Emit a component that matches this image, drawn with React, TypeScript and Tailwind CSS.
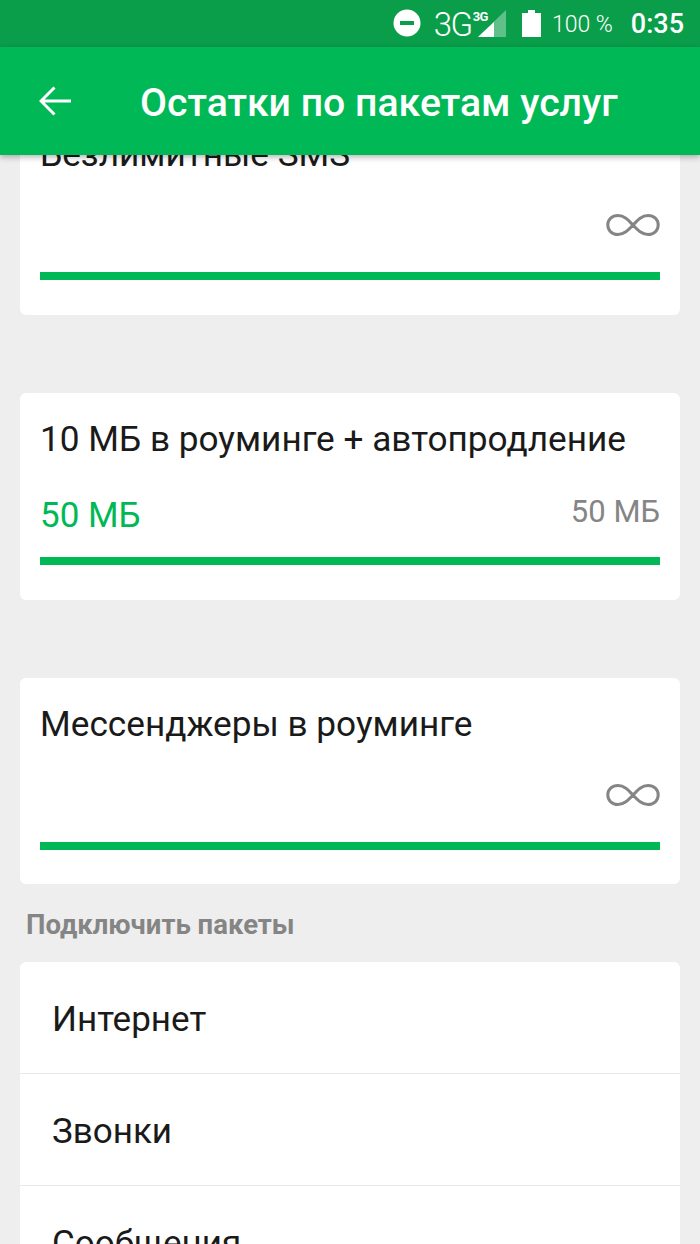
import React from 'react';

const Infinity8 = () => (
  <svg width="54" height="24" viewBox="0 0 54 24" fill="none">
    <path
      d="M27 12C22 6.500 18 2.500 12 2.500C6 2.500 1.800 6.500 1.800 12C1.800 17.500 6 21.500 12 21.500C18 21.500 22 17.500 27 12C32 6.500 36 2.500 42 2.500C48 2.500 52.200 6.500 52.200 12C52.200 17.500 48 21.500 42 21.500C36 21.500 32 17.500 27 12Z"
      stroke="#858585"
      strokeWidth="3"
    />
  </svg>
);

const StatusBar = () => (
  <div className="h-[47px] bg-[#0a9e4b] flex items-center justify-end pr-[16px] text-white font-['Roboto',sans-serif]">
    <svg width="28" height="28" viewBox="0 0 28 28" className="mr-[13px] -mt-[1px]">
      <circle cx="14" cy="14" r="13.500" fill="#fff" />
      <rect x="7" y="12" width="14" height="4" fill="#0a9e4b" />
    </svg>
    <span className="text-[33px] leading-none font-light tracking-[-1.500px] mt-[1px]">3G</span>
    <span className="text-[13px] font-bold leading-none self-start mt-[10px] ml-[1px] tracking-[-0.500px]">3G</span>
    <svg width="28" height="27" viewBox="0 0 28 27" className="-ml-[10px] mr-[16px]">
      <path d="M28 0V27H0Z" fill="#fff" fillOpacity="0.35" />
      <path d="M16 12V27H0Z" fill="#fff" />
    </svg>
    <svg width="19" height="27" viewBox="0 0 19 27" className="mr-[11px]">
      <path d="M6 0H13V3H19V27H0V3H6Z" fill="#fff" />
    </svg>
    <span className="text-[23px] leading-none font-light mr-[18px] mt-[2px]">100 %</span>
    <span className="text-[27px] leading-none font-medium mt-[2px]">0:35</span>
  </div>
);

const Header = () => (
  <div className="h-[108px] bg-[#00b956] flex items-center shadow-[0_2px_6px_rgba(0,0,0,0.3)]">
    <svg width="32" height="30" viewBox="0 0 32 30" fill="none" className="ml-[39px]">
      <path d="M32 15H2M15.500 1.500L2 15L15.500 28.500" stroke="#fff" strokeWidth="3" />
    </svg>
    <h1 className="ml-[69px] mt-[6px] text-[39.200px] leading-none font-medium text-white">Остатки по пакетам услуг</h1>
  </div>
);

const PackageCard = ({ title, used, total, short }: { title: string; used?: string; total?: string; short?: boolean }) => (
  <div className={`bg-white rounded-[6px] px-5 pt-[24px] flex flex-col ${short ? 'h-[206px]' : 'h-[207px]'}`}>
    <div className="text-[35.200px] leading-[44px] text-[#1a1a1a]">{title}</div>
    <div className="flex justify-between items-center h-[60px] mt-[19px]">
      <span className="text-[35px] text-[#00b956] mt-[12px]">{used}</span>
      {total ? (
        <span className="text-[31px] text-[#858585] mt-[4px]">{total}</span>
      ) : (
        <Infinity8 />
      )}
    </div>
    <div className="h-2 bg-[#00b956] mt-[17px]" />
  </div>
);

const MenuRow = ({ label, last }: { label: string; last?: boolean }) => (
  <div className={`h-[112px] flex items-center pl-[32px] pt-[5px] text-[35px] text-[#1a1a1a] ${last ? '' : 'border-b border-[#e8e8e8]'}`}>
    {label}
  </div>
);

export default function App() {
  return (
    <div className="h-[1244px] w-[700px] overflow-hidden bg-[#eeeeee] font-['Roboto',sans-serif]">
      <div className="relative z-10">
        <StatusBar />
        <Header />
      </div>
      <div className="-mt-[47px] px-5 flex flex-col">
        <div className="flex flex-col gap-[78px]">
          <PackageCard title="Безлимитные SMS" />
          <PackageCard title="10 МБ в роуминге + автопродление" used="50 МБ" total="50 МБ" />
          <PackageCard title="Мессенджеры в роуминге" short />
        </div>
        <div className="h-[78px] flex items-center pl-[6px] pt-[4px] text-[27.500px] font-bold text-[#858585]">Подключить пакеты</div>
        <div className="bg-white rounded-[6px]">
          <MenuRow label="Интернет" />
          <MenuRow label="Звонки" />
          <MenuRow label="Сообщения" last />
        </div>
      </div>
    </div>
  );
}
